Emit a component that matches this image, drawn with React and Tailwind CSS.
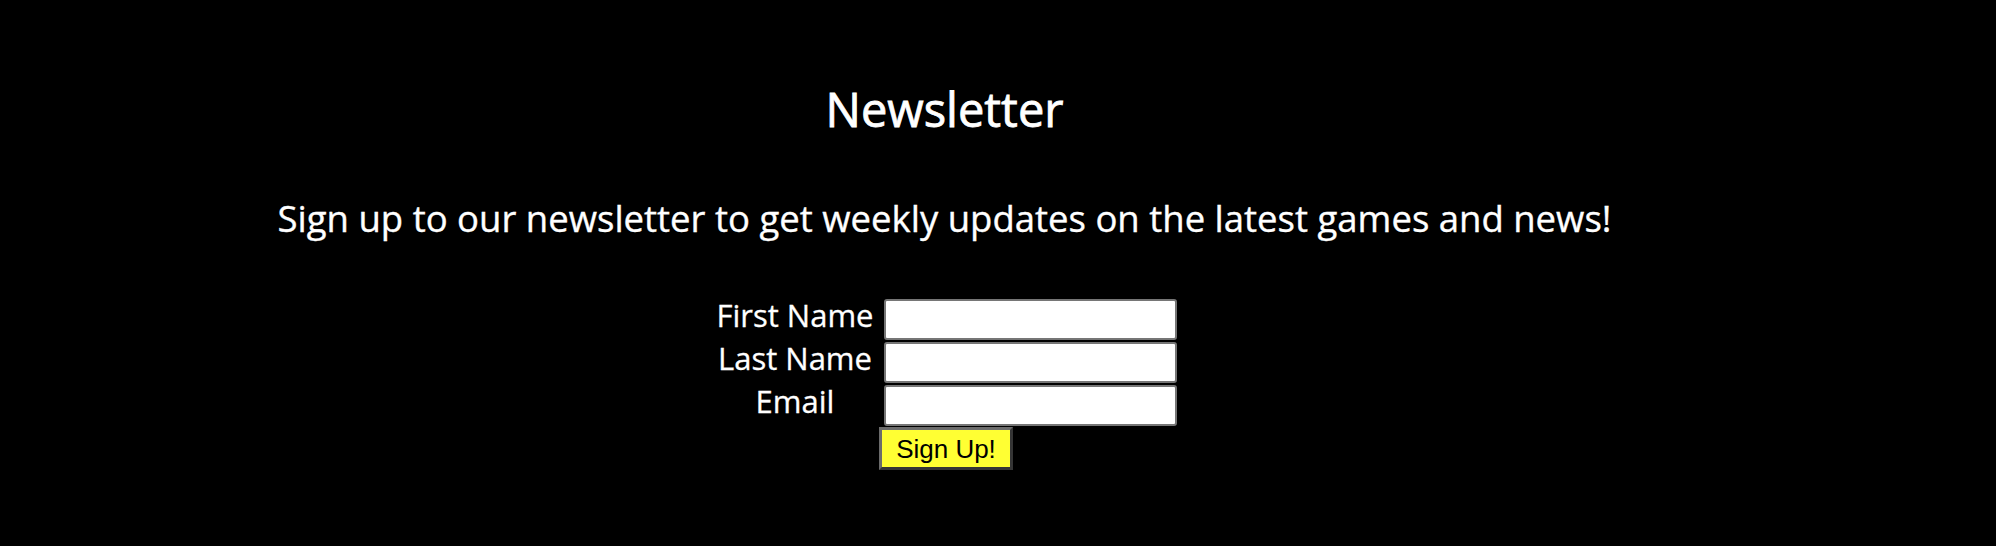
export default function App() {
  const font = { fontFamily: '"Open Sans", "Noto Sans", sans-serif' };
  return (
    <div className="min-h-[546px] w-full bg-black text-white pt-[77px]" style={font}>
      <h1 className="flex justify-center pr-[107px] text-[47px] leading-[64px] font-normal [-webkit-text-stroke:0.8px_white]">Newsletter</h1>
      <p className="mt-[53px] flex justify-center pr-[107px] text-[36.5px] leading-[48px] font-normal [-webkit-text-stroke:0.35px_white]">
        Sign up to our newsletter to get weekly updates on the latest games and news!
      </p>
      <div className="mt-[57px] flex justify-center pr-[109px]">
        <form className="grid grid-cols-[170px_293px] gap-x-[4px] gap-y-[2px]" onSubmit={(e) => e.preventDefault()}>
          <label className="text-center text-[31px] leading-[32px] [-webkit-text-stroke:0.3px_white]">First Name</label>
          <input className="h-[41px] bg-white border-2 border-[#767676] rounded-[3px]" type="text" />
          <label className="text-center text-[31px] leading-[32px] [-webkit-text-stroke:0.3px_white]">Last Name</label>
          <input className="h-[41px] bg-white border-2 border-[#767676] rounded-[3px]" type="text" />
          <label className="text-center text-[31px] leading-[32px] [-webkit-text-stroke:0.3px_white]">Email</label>
          <input className="h-[41px] bg-white border-2 border-[#767676] rounded-[3px]" type="email" />
          <div />
          <div className="-mt-[1px]">
            <button
              type="submit"
              className="-ml-[5px] w-[134px] h-[43px] bg-[#ffff33] text-black text-[26px] leading-none border-[3px] border-t-[#6b6b6b] border-l-[#6b6b6b] border-b-[#353535] border-r-[#353535]"
              style={{ fontFamily: '"Liberation Sans", Arial, sans-serif' }}
            >
              Sign Up!
            </button>
          </div>
        </form>
      </div>
    </div>
  );
}
